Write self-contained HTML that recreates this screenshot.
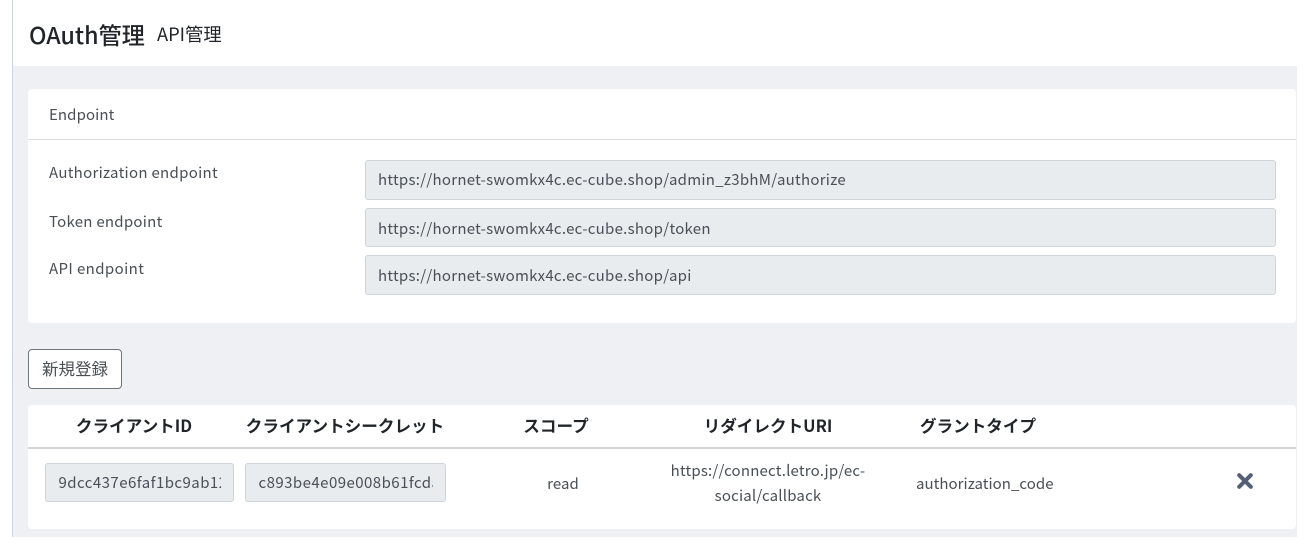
<!DOCTYPE html>
<html lang="ja"><head><meta charset="utf-8"><style>
html,body{margin:0;padding:0;background:#fff}
body{width:1310px;height:550px;position:relative;overflow:hidden;font-family:"Noto Sans CJK JP","Liberation Sans",sans-serif;font-size:15px;color:#4a4f54}
div{position:absolute;box-sizing:border-box;white-space:nowrap}
.t{line-height:20px}
.inp{background:#e9ecef;border:1px solid #ced4da;border-radius:3px;color:#495057;overflow:hidden}
.th{font-weight:700;color:#212529;font-size:16.6px;line-height:24px;text-align:center}
.c{text-align:center}
</style></head><body>
<div style="left:12px;top:0;width:1px;height:537px;background:#ccd3e4"></div>
<div style="left:13px;top:66px;width:1284px;height:471px;background:#eef0f4"></div>
<div class="t" style="left:29px;top:20px;font-size:23.2px;line-height:28px;font-weight:500;color:#212529">OAuth管理</div>
<div class="t" style="left:157px;top:22px;font-size:18.3px;line-height:24px;color:#212529">API管理</div>

<div style="left:28px;top:89px;width:1268px;height:234px;background:#fff;border-radius:4px"></div>
<div style="left:28px;top:139px;width:1268px;height:1px;background:#dfe1e4"></div>
<div class="t" style="left:49px;top:105px;letter-spacing:.1px">Endpoint</div>
<div class="t" style="left:49px;top:163px;letter-spacing:.3px">Authorization endpoint</div>
<div class="t" style="left:49px;top:212px;letter-spacing:.26px">Token endpoint</div>
<div class="t" style="left:49px;top:259px;letter-spacing:.4px">API endpoint</div>
<div class="inp" style="left:365px;top:160px;width:911px;height:40px;line-height:38px;padding-left:12px;letter-spacing:.27px">https://hornet-swomkx4c.ec-cube.shop/admin_z3bhM/authorize</div>
<div class="inp" style="left:365px;top:208px;width:911px;height:39px;line-height:39px;padding-left:12px;letter-spacing:.27px">https://hornet-swomkx4c.ec-cube.shop/token</div>
<div class="inp" style="left:365px;top:255px;width:911px;height:40px;line-height:40px;padding-left:12px;letter-spacing:.27px">https://hornet-swomkx4c.ec-cube.shop/api</div>

<div style="left:28px;top:349px;width:94px;height:40px;background:#fff;border:1px solid #6c757d;border-radius:4px;text-align:center;line-height:36px;font-size:16.5px;color:#4a4f54">新規登録</div>

<div style="left:28px;top:405px;width:1268px;height:124px;background:#fff;border-radius:4px"></div>
<div style="left:28px;top:447px;width:1268px;height:2px;background:#d4d5d7"></div>
<div class="th" style="left:34px;top:413px;width:200px">クライアントID</div>
<div class="th" style="left:245px;top:413px;width:200px">クライアントシークレット</div>
<div class="th" style="left:506px;top:413px;width:100px">スコープ</div>
<div class="th" style="left:668px;top:413px;width:200px">リダイレクトURI</div>
<div class="th" style="left:878px;top:413px;width:200px">グラントタイプ</div>
<div class="inp" style="left:45px;top:463px;width:189px;height:39px;line-height:37px;padding:0 12px 0 12.5px;letter-spacing:.45px"><span style="display:block;overflow:hidden">9dcc437e6faf1bc9ab12a7f3</span></div>
<div class="inp" style="left:245px;top:463px;width:201px;height:39px;line-height:37px;padding:0 12px 0 12.5px;letter-spacing:.45px"><span style="display:block;overflow:hidden">c893be4e09e008b61fcda6e2</span></div>
<div class="c t" style="left:513px;top:474px;width:100px;letter-spacing:.1px">read</div>
<div class="c" style="left:662px;top:459px;width:212px;line-height:24.6px;letter-spacing:.2px">https://connect.letro.jp/ec-<br>social/callback</div>
<div class="t" style="left:916px;top:474px;letter-spacing:.05px">authorization_code</div>
<svg style="position:absolute;left:1236px;top:472px" width="18" height="18" viewBox="0 0 18 18"><path d="M3.2 3.2L14.8 14.8M14.8 3.2L3.2 14.8" stroke="#525f74" stroke-width="4" stroke-linecap="round"/></svg>
</body></html>
